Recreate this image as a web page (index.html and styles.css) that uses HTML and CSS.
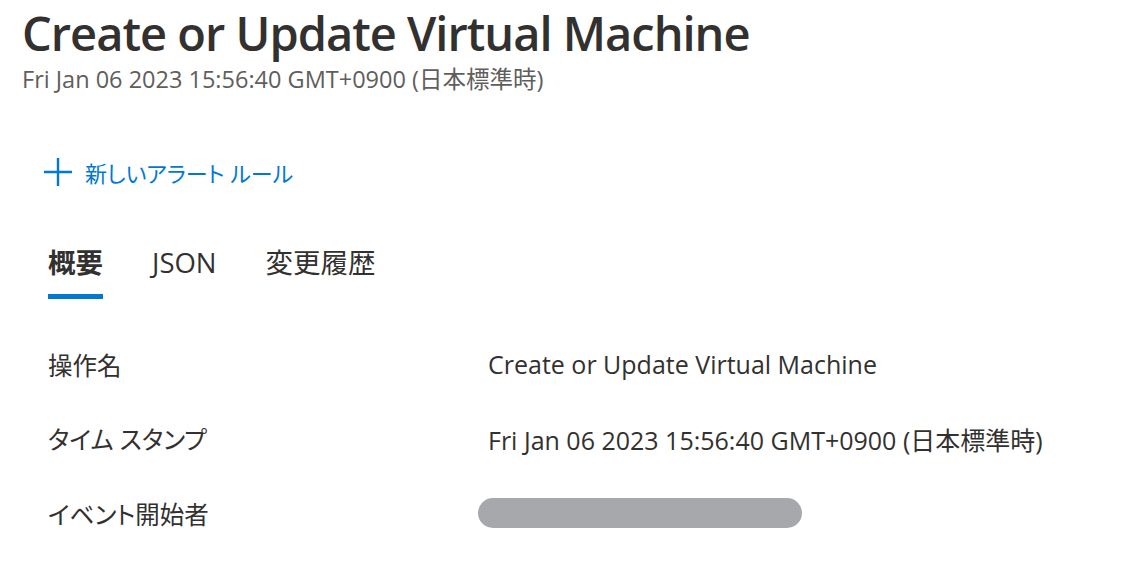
FILE: index.html
```html
<!DOCTYPE html>
<html lang="ja">
<head>
<meta charset="utf-8">
<link rel="stylesheet" href="styles.css">
</head>
<body>
<div class="page">
  <header class="header">
    <h1 class="title">Create or Update Virtual Machine</h1>
    <div class="subtitle">Fri Jan 06 2023 15:56:40 GMT+0900 (日本標準時)</div>
  </header>
  <div class="toolbar">
    <button class="cmd">
      <svg class="plus" width="30" height="30" viewBox="0 0 30 30"><path d="M15 1v28M1 15h28" stroke="#0078d4" stroke-width="2.4" fill="none"/></svg>
      <span class="cmd-label">新しいアラート ルール</span>
    </button>
  </div>
  <nav class="tabs">
    <div class="tab active">概要</div>
    <div class="tab">JSON</div>
    <div class="tab">変更履歴</div>
  </nav>
  <div class="details">
    <div class="row"><div class="label">操作名</div><div class="value">Create or Update Virtual Machine</div></div>
    <div class="row"><div class="label">タイム スタンプ</div><div class="value">Fri Jan 06 2023 15:56:40 GMT+0900 (日本標準時)</div></div>
    <div class="row"><div class="label">イベント開始者</div><div class="value"><span class="redacted"></span></div></div>
  </div>
</div>
</body>
</html>
```
FILE: styles.css
```css
html, body {
  margin: 0;
  padding: 0;
  background: #ffffff;
}
body {
  font-family: "Open Sans", "Noto Sans CJK JP", sans-serif;
  color: #323130;
  font-feature-settings: "palt" 1;
}
.page {
  padding: 0 0 0 22px;
}
.title {
  margin: 0;
  padding-top: 2px;
  font-size: 47px;
  font-weight: 600;
  letter-spacing: -1px;
  line-height: 62px;
  color: #323130;
}
.subtitle {
  font-size: 23.5px;
  line-height: 30px;
  color: #605e5c;
}
.toolbar {
  margin-top: 62px;
  padding-left: 21px;
}
.cmd {
  display: flex;
  align-items: center;
  gap: 12px;
  border: 0;
  background: none;
  padding: 0;
  font: inherit;
  cursor: pointer;
}
.cmd-label {
  font-size: 22px;
  color: #0078d4;
}
.tabs {
  display: flex;
  gap: 49px;
  margin-top: 56px;
  padding-left: 26px;
}
.tab {
  font-size: 27.5px;
  line-height: 38px;
  padding-bottom: 12px;
  border-bottom: 5px solid transparent;
  color: #323130;
}
.tab.active {
  font-weight: 700;
  border-bottom-color: #0078d4;
}
.details {
  margin-top: 28px;
  padding-left: 26px;
}
.row {
  display: flex;
  align-items: center;
  height: 74.5px;
}
.label {
  width: 440px;
  font-size: 24.5px;
  color: #323130;
}
.value {
  font-size: 25px;
  color: #323130;
}
.redacted {
  display: block;
  width: 324px;
  height: 30px;
  margin-left: -10px;
  border-radius: 15px;
  background: #a7a8ab;
}
```
